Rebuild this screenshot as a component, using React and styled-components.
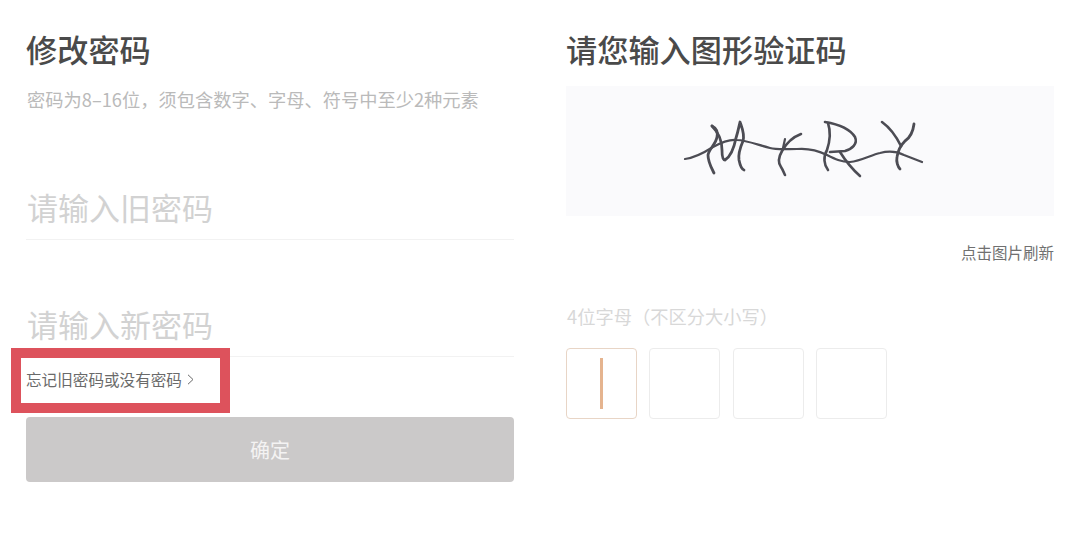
import React from "react";
import styled, {createGlobalStyle} from "styled-components";

const GlobalStyle = createGlobalStyle`
  html, body {
    margin: 0;
    padding: 0;
    background: #ffffff;
    font-family: "Noto Sans CJK SC", "Noto Sans", sans-serif;
  }
`;

const Page = styled.div`
  display: grid;
  grid-template-columns: 488px 488px;
  column-gap: 52px;
  width: 1080px;
  height: 539px;
  box-sizing: border-box;
  padding: 29px 26px 0;
  overflow: hidden;
`;

const Column = styled.section`
  display: flex;
  flex-direction: column;
`;

const Title = styled.h1`
  margin: 0;
  font-size: 31.2px;
  line-height: 40px;
  font-weight: 500;
  color: #4a4a4a;
`;

const Subtitle = styled.p`
  margin: 18px 0 0;
  padding-left: 1px;
  font-size: 18.25px;
  line-height: 24px;
  color: #bababa;
  white-space: nowrap;
`;

const Field = styled.div`
  height: 60px;
  box-sizing: border-box;
  margin-top: ${props => props.top}px;
  padding: 0 0 7px 1px;
  display: flex;
  align-items: center;
  font-size: 31px;
  color: #d2d2d2;
  border-bottom: 1px solid #f2f2f2;
`;

const LinkRow = styled.div`
  position: relative;
  margin-top: 10px;
  height: 24px;
  display: flex;
  align-items: center;
  gap: 5px;
  font-size: 15.6px;
  line-height: 24px;
  color: #6a6a6a;
`;

const Highlight = styled.div`
  position: absolute;
  left: -15px;
  top: -19px;
  width: 219px;
  height: 65px;
  box-sizing: border-box;
  border: 10px solid #dd525c;
`;

const SubmitButton = styled.button`
  margin-top: 26px;
  height: 65px;
  border: 0;
  border-radius: 4px;
  background: #cbc9c9;
  color: #f4f3f3;
  font-family: inherit;
  font-size: 20px;
`;

const Captcha = styled.div`
  margin-top: 17px;
  height: 130px;
  box-sizing: border-box;
  padding: 0 10px 7px 0;
  display: flex;
  align-items: center;
  justify-content: center;
  background: #fafafc;
`;

const RefreshText = styled.div`
  margin-top: 24px;
  text-align: right;
  font-size: 15.5px;
  line-height: 24px;
  color: #707070;
`;

const Hint = styled.div`
  margin-top: 40px;
  padding-left: 1px;
  font-size: 18.25px;
  line-height: 24px;
  color: #d8d8d8;
  white-space: nowrap;
`;

const CodeRow = styled.div`
  margin-top: 20px;
  display: flex;
  gap: 12.33px;
`;

const CodeBox = styled.div`
  width: 71px;
  height: 71px;
  box-sizing: border-box;
  border-radius: 4px;
  border: 1px solid ${props => props.active ? "#e8d5c6" : "#ececec"};
  display: flex;
  align-items: center;
  justify-content: center;
`;

const Caret = styled.div`
  width: 3px;
  height: 51px;
  background: #e5b48f;
`;

const CaptchaDrawing = () => (
  <svg width="250" height="75" viewBox="0 0 250 75" fill="none" stroke="#4c4c54" strokeWidth="2.2" strokeLinecap="round" strokeLinejoin="round">
    <path d="M5 49C13 48 22 44 33 37C42 32 50 29 57 30C66 30 78 35 90 38C97 40 107 39 117 39C128 38 137 40 147 45C155 49 161 52 170 52C181 51 191 45 200 43C208 41 216 41 224 45L242 52" />
    <path d="M32 16C36 18 38 22 37 27C36 34 29 39 28 45C28 52 31 57 34 63" strokeWidth="2.8" />
    <path d="M32 16C38 22 42 31 42 40C42 46 43 50 45 50C50 47 54 38 56 28C58 22 59 16 60 12C62 18 65 24 63 31C60 38 58 44 59 50C60 55 61 59 64 60" strokeWidth="2.8" />
    <path d="M121 24C113 27 107 32 102 41C98 48 98 53 101 57C103 60 104 63 105 65" strokeWidth="2.6" />
    <path d="M105 29L103 38" />
    <path d="M145 12C157 14 170 19 175 27C178 34 172 39 165 41L150 42" strokeWidth="2.6" />
    <path d="M148 13C151 22 150 31 147 40C143 47 144 55 148 60" strokeWidth="2.6" />
    <path d="M160 42C165 50 171 58 180 66" strokeWidth="2.6" />
    <path d="M202 12C209 17 215 24 221 36" strokeWidth="2.6" />
    <path d="M234 14C233 22 231 27 225 31C221 35 218 40 217 47C216 52 218 57 220 59" strokeWidth="2.8" />
  </svg>
);

const App = () => (
  <Page>
    <GlobalStyle />
    <Column>
      <Title>修改密码</Title>
      <Subtitle>密码为8&#8211;16位&#xFF0C;须包含数字、字母、符号中至少2种元素</Subtitle>
      <Field top={69}>请输入旧密码</Field>
      <Field top={57}>请输入新密码</Field>
      <LinkRow>
        忘记旧密码或没有密码
        <svg width="7" height="11" viewBox="0 0 7 11" fill="none" stroke="#6a6a6a" strokeWidth="1">
          <path d="M1 .8L6 5.5L1 10.2" />
        </svg>
        <Highlight />
      </LinkRow>
      <SubmitButton>确定</SubmitButton>
    </Column>
    <Column>
      <Title>请您输入图形验证码</Title>
      <Captcha>
        <CaptchaDrawing />
      </Captcha>
      <RefreshText>点击图片刷新</RefreshText>
      <Hint>4位字母&#xFF08;不区分大小写&#xFF09;</Hint>
      <CodeRow>
        <CodeBox active>
          <Caret />
        </CodeBox>
        <CodeBox />
        <CodeBox />
        <CodeBox />
      </CodeRow>
    </Column>
  </Page>
);

export default App;
